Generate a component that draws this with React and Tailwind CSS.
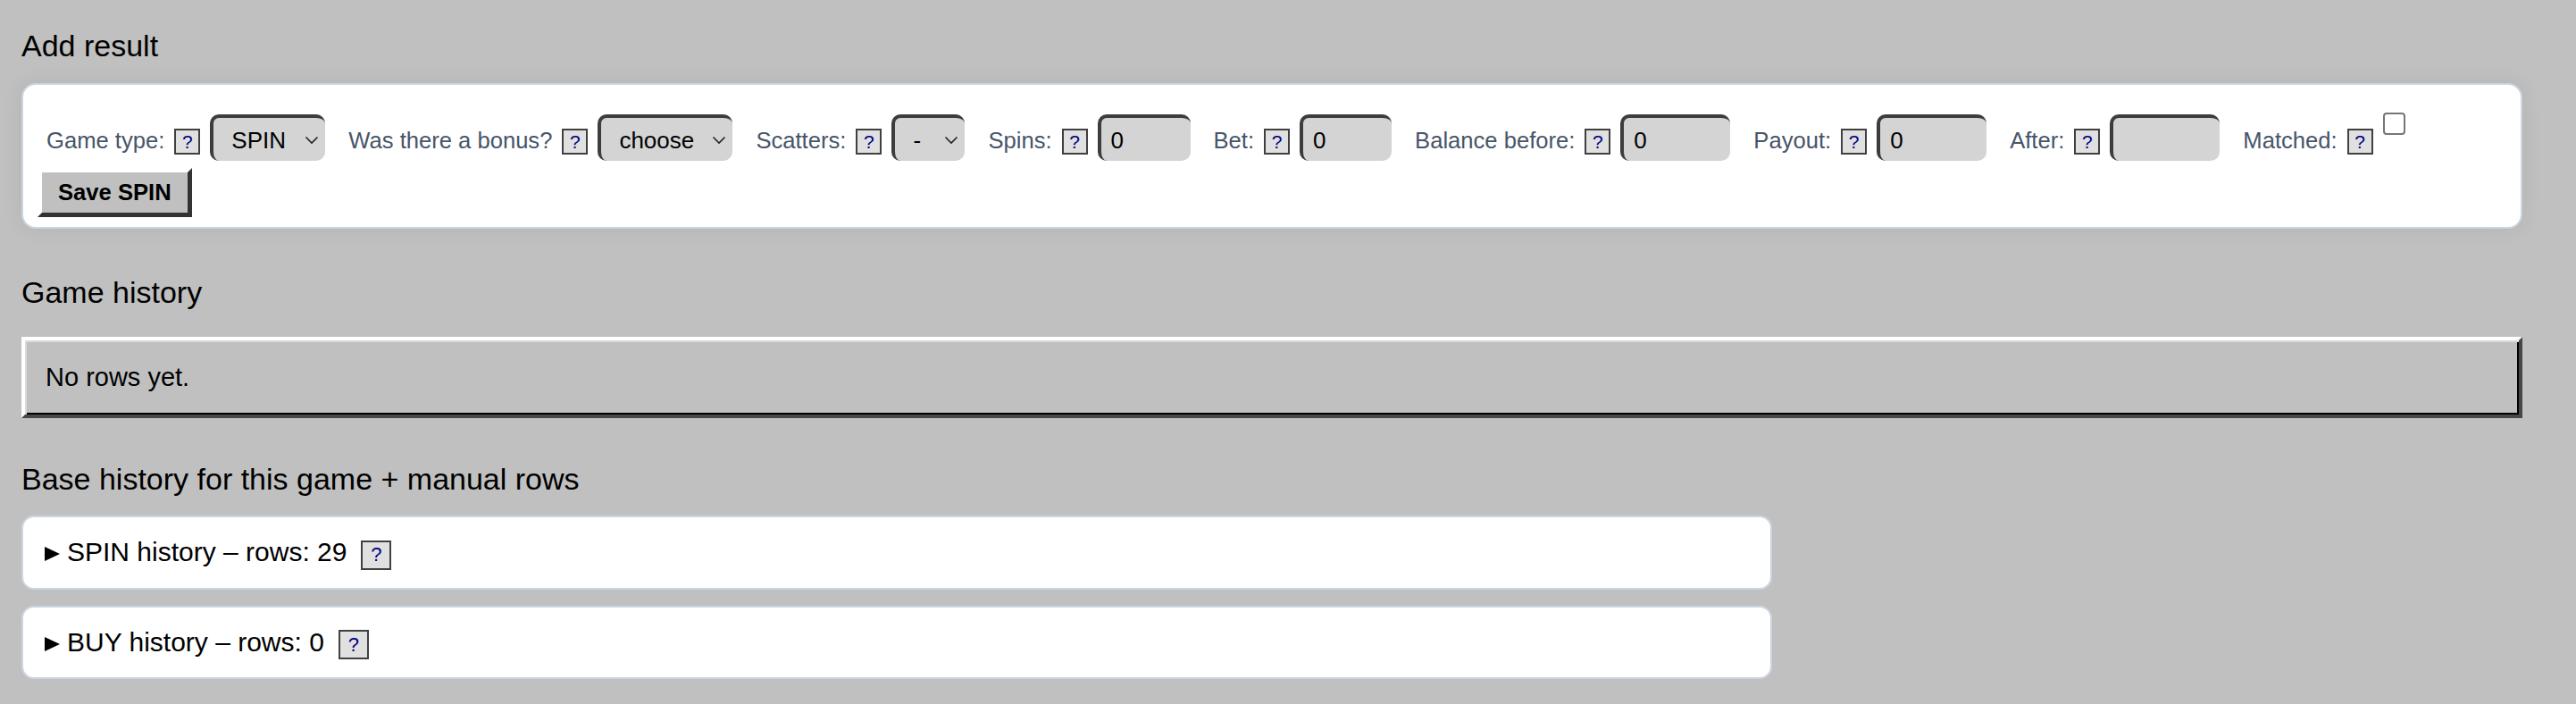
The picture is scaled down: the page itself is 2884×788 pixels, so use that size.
import React from 'react';

const fields = [
  { label: 'Game type:', kind: 'select', value: 'SPIN', w: 'w-[129px]' },
  { label: 'Was there a bonus?', kind: 'select', value: 'choose', w: 'w-[151px]' },
  { label: 'Scatters:', kind: 'select', value: '-', w: 'w-[82px]' },
  { label: 'Spins:', kind: 'input', value: '0', w: 'w-[104px]' },
  { label: 'Bet:', kind: 'input', value: '0', w: 'w-[103px]' },
  { label: 'Balance before:', kind: 'input', value: '0', w: 'w-[123px]' },
  { label: 'Payout:', kind: 'input', value: '0', w: 'w-[123px]' },
  { label: 'After:', kind: 'input', value: '', w: 'w-[123px]' },
];

function HelpBox({ big }) {
  if (big) {
    return (
      <span className="ml-[16px] inline-flex h-[33px] w-[34px] items-center justify-center border-2 border-[#404040] bg-[#e0e0e0] text-[22px] leading-none text-[#000080]">
        ?
      </span>
    );
  }
  return (
    <span className="inline-flex h-[29px] w-[29px] items-center justify-center border-2 border-[#404040] bg-[#e0e0e0] text-[21px] leading-none text-[#000080]">
      ?
    </span>
  );
}

function Chevron() {
  return (
    <svg width="16" height="10" viewBox="0 0 16 10" fill="none">
      <path d="M1.5 1.5 L8 8 L14.5 1.5" stroke="#222" strokeWidth="1.6" />
    </svg>
  );
}

function Control({ field }) {
  // fake select keeps the chevron under our control
  if (field.kind === 'select') {
    return (
      <div className={`${field.w} flex h-[52px] items-center justify-between rounded-[10px] border-t-4 border-l-4 border-[#3d3d3d] bg-[#d4d4d4] pt-[2px] pl-[20px] pr-[7px] text-[26px] text-black`}>
        <span>{field.value}</span>
        <Chevron />
      </div>
    );
  }
  return (
    <input
      readOnly
      value={field.value}
      className={`${field.w} h-[52px] rounded-[10px] border-t-4 border-l-4 border-[#3d3d3d] bg-[#d4d4d4] pt-[2px] pl-[11px] text-[26px] text-black outline-none`}
    />
  );
}

function HistoryCard({ label }) {
  return (
    <details className="rounded-[14px] border-2 border-[#cbd5e1] bg-white">
      <summary className="flex cursor-pointer list-none items-baseline pl-[24px] pt-[22px] pb-[20px] text-[30px] leading-[34px] text-black [&::-webkit-details-marker]:hidden">
        <svg width="17" height="16" viewBox="0 0 17 16" className="mr-[8px] h-[16px] w-[17px] shrink-0">
          <polygon points="0,0 17,8 0,16" fill="#000" />
        </svg>
        <span>{label}</span>
        <HelpBox big />
      </summary>
    </details>
  );
}

export default function App() {
  return (
    <div className="min-h-screen bg-[#c0c0c0] font-['Liberation_Sans',Arial,sans-serif]">
      <div className="max-w-[2848px] px-[24px] pt-[32px] pb-[20px]">
        <h2 className="text-[34px] leading-[39px] font-normal text-black">Add result</h2>

        <div className="mt-[22px] flex flex-col gap-[8px] rounded-[16px] border-2 border-[#cbd5e1] bg-white px-[16px] pt-[33px] pb-[11px] shadow-[0_0_24px_rgba(0,0,0,0.07)]">
          <div className="flex flex-wrap items-baseline">
            {fields.map((f) => (
              <div key={f.label} className="ml-[10px] mr-[16px] flex items-baseline gap-[11px]">
                <span className="text-[25.6px] text-[#475569]">{f.label}</span>
                <HelpBox />
                <Control field={f} />
              </div>
            ))}
            <div className="ml-[10px] mr-[11px] flex items-baseline gap-[11px]">
              <span className="text-[25.6px] text-[#475569]">Matched:</span>
              <HelpBox />
            </div>
            <input
              type="checkbox"
              className="-mt-[2px] h-[25px] w-[25px] appearance-none self-start rounded-[4px] border-2 border-[#767676] bg-white"
            />
          </div>
          <button className="self-start border-[5px] border-t-white border-l-white border-r-[#333] border-b-[#333] bg-[#c0c0c0] px-[18px] py-[8px] text-[25.6px] leading-[29px] font-bold text-black">
            Save SPIN
          </button>
        </div>

        <h2 className="mt-[52px] text-[34px] leading-[39px] font-normal text-black">Game history</h2>
        <div className="mt-[30px] border-[4px] border-t-white border-l-white border-r-[#474747] border-b-[#474747] bg-[#c0c0c0] pl-[23px] pt-[25px] pb-[25px] text-[29px] leading-[33px] text-black shadow-[inset_2px_2px_0_#dadada,inset_-2px_-2px_0_#000]">
          No rows yet.
        </div>

        <h2 className="mt-[49px] text-[34px] leading-[39px] font-normal text-black">Base history for this game + manual rows</h2>
        <div className="mt-[21px] flex w-[1960px] flex-col gap-[18px]">
          <HistoryCard label="SPIN history – rows: 29" />
          <HistoryCard label="BUY history – rows: 0" />
        </div>
      </div>
    </div>
  );
}
